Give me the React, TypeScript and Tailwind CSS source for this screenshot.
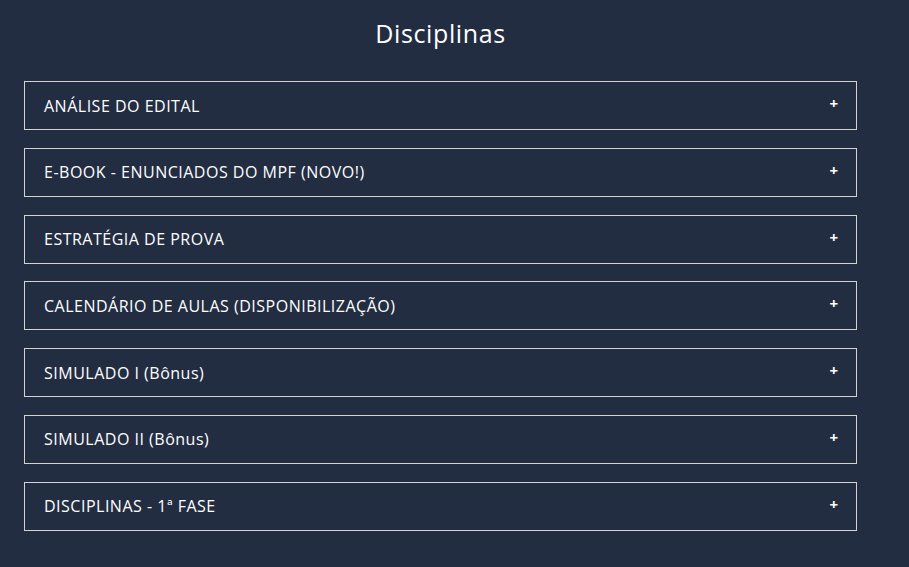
const items = [
  "ANÁLISE DO EDITAL",
  "E-BOOK - ENUNCIADOS DO MPF (NOVO!)",
  "ESTRATÉGIA DE PROVA",
  "CALENDÁRIO DE AULAS (DISPONIBILIZAÇÃO)",
  "SIMULADO I (Bônus)",
  "SIMULADO II (Bônus)",
  "DISCIPLINAS - 1ª FASE",
];

export default function App() {
  return (
    <div
      className="min-h-[567px] w-full bg-[#222d42] text-white"
      style={{ fontFamily: '"Open Sans", "Liberation Sans", sans-serif' }}
    >
      <div className="pl-6 pr-[52px]">
        <h2 className="pt-[17px] text-center text-[25px] leading-[32px] font-normal tracking-[0.6px]">
          Disciplinas
        </h2>
        <div className="flex flex-col gap-[17.8px] pt-[32px]">
          {items.map((item) => (
            <div
              key={item}
              className="flex h-[49px] items-center justify-between border border-[#d2d2d2] pl-[19px] pr-[18px]"
            >
              <span className="text-[16px] font-medium tracking-[0.5px]">{item}</span>
              <span className="-mt-[4px] text-[15px] font-bold leading-none">+</span>
            </div>
          ))}
        </div>
      </div>
    </div>
  );
}
